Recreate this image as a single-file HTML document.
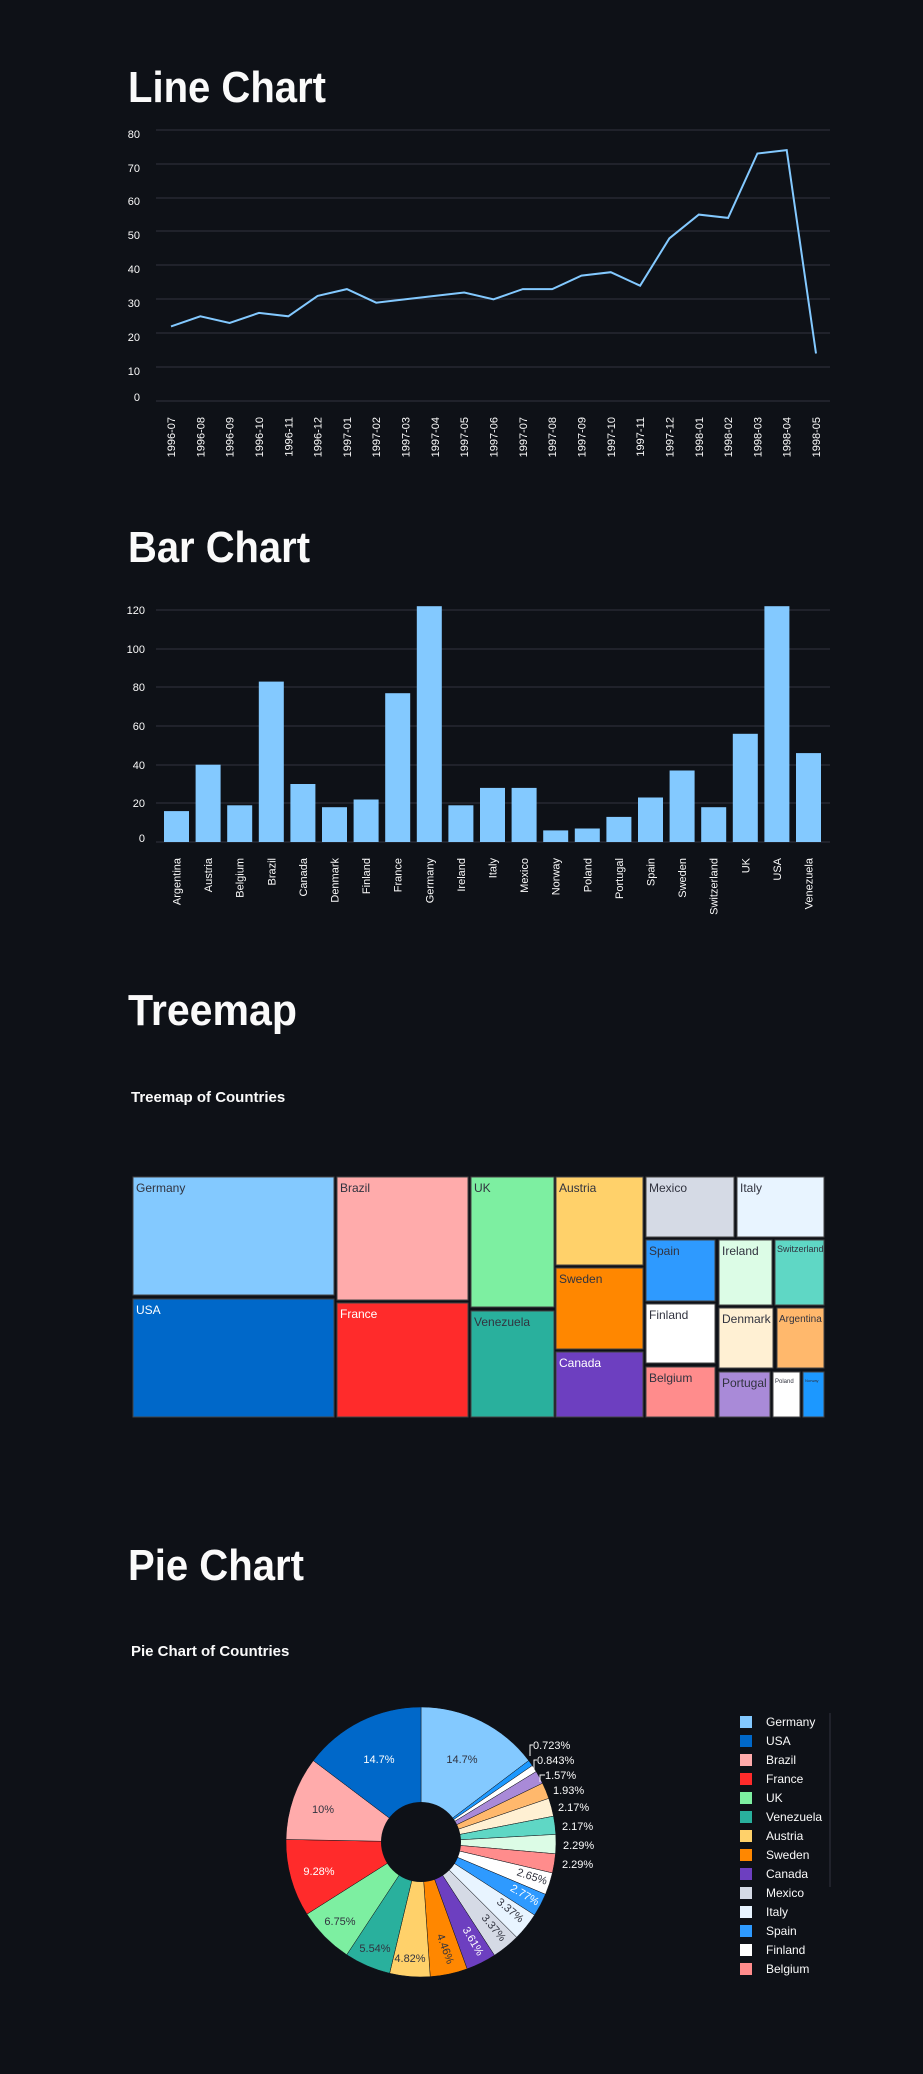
<!DOCTYPE html>
<html><head><meta charset="utf-8"><style>
html,body{margin:0;padding:0;background:#0e1117;}
svg{display:block;font-family:"Liberation Sans",sans-serif;}
.t{font-weight:bold;fill:#fafafa;font-size:44px}
.ax{fill:#fafafa;font-size:11px}
.g{stroke:#31333f;stroke-width:1}
.tm{font-size:12px;fill:#31333f}
.tw{font-size:12px;fill:#fff}
.pl{font-size:11px;fill:#31333f}
.po{font-size:11px;fill:#fafafa}
.lg{font-size:12px;fill:#fafafa}
</style></head><body>
<svg width="923" height="2074" viewBox="0 0 923 2074" xmlns="http://www.w3.org/2000/svg">
<rect width="923" height="2074" fill="#0e1117"/>
<text class="t" x="128" y="102" textLength="198" lengthAdjust="spacingAndGlyphs">Line Chart</text>
<g class="g">
<line x1="156" x2="830" y1="130" y2="130"/><line x1="156" x2="830" y1="164" y2="164"/><line x1="156" x2="830" y1="198" y2="198"/><line x1="156" x2="830" y1="231" y2="231"/><line x1="156" x2="830" y1="265" y2="265"/><line x1="156" x2="830" y1="299" y2="299"/><line x1="156" x2="830" y1="333" y2="333"/><line x1="156" x2="830" y1="367" y2="367"/><line x1="156" x2="830" y1="401" y2="401"/>
</g>
<g class="ax" text-anchor="end">
<text x="140" y="138">80</text><text x="140" y="172">70</text><text x="140" y="205">60</text><text x="140" y="239">50</text><text x="140" y="273">40</text><text x="140" y="307">30</text><text x="140" y="341">20</text><text x="140" y="375">10</text><text x="140" y="401">0</text>
</g>
<polyline fill="none" stroke="#83c9ff" stroke-width="2" points="171,326.4 200.3,316.3 229.6,323 259,312.9 288.3,316.3 317.6,295.9 346.9,289.1 376.2,302.7 405.6,299.3 434.9,295.9 464.2,292.5 493.5,299.3 522.8,289.1 552.2,289.1 581.5,275.6 610.8,272.2 640.1,285.7 669.4,238.3 698.8,214.6 728.1,217.9 757.4,153.5 786.7,150.1 816,353.5"/>
<g class="ax" text-anchor="end">
<text transform="translate(175,417) rotate(-90)">1996-07</text>
<text transform="translate(204.3,417) rotate(-90)">1996-08</text>
<text transform="translate(233.6,417) rotate(-90)">1996-09</text>
<text transform="translate(263,417) rotate(-90)">1996-10</text>
<text transform="translate(292.3,417) rotate(-90)">1996-11</text>
<text transform="translate(321.6,417) rotate(-90)">1996-12</text>
<text transform="translate(350.9,417) rotate(-90)">1997-01</text>
<text transform="translate(380.2,417) rotate(-90)">1997-02</text>
<text transform="translate(409.6,417) rotate(-90)">1997-03</text>
<text transform="translate(438.9,417) rotate(-90)">1997-04</text>
<text transform="translate(468.2,417) rotate(-90)">1997-05</text>
<text transform="translate(497.5,417) rotate(-90)">1997-06</text>
<text transform="translate(526.8,417) rotate(-90)">1997-07</text>
<text transform="translate(556.2,417) rotate(-90)">1997-08</text>
<text transform="translate(585.5,417) rotate(-90)">1997-09</text>
<text transform="translate(614.8,417) rotate(-90)">1997-10</text>
<text transform="translate(644.1,417) rotate(-90)">1997-11</text>
<text transform="translate(673.4,417) rotate(-90)">1997-12</text>
<text transform="translate(702.8,417) rotate(-90)">1998-01</text>
<text transform="translate(732.1,417) rotate(-90)">1998-02</text>
<text transform="translate(761.4,417) rotate(-90)">1998-03</text>
<text transform="translate(790.7,417) rotate(-90)">1998-04</text>
<text transform="translate(820,417) rotate(-90)">1998-05</text>
</g>
<text class="t" x="128" y="562" textLength="182" lengthAdjust="spacingAndGlyphs">Bar Chart</text>
<g class="g">
<line x1="156" x2="830" y1="610" y2="610"/><line x1="156" x2="830" y1="649" y2="649"/><line x1="156" x2="830" y1="687" y2="687"/><line x1="156" x2="830" y1="726" y2="726"/><line x1="156" x2="830" y1="765" y2="765"/><line x1="156" x2="830" y1="803" y2="803"/><line x1="156" x2="830" y1="842" y2="842"/>
</g>
<g class="ax" text-anchor="end">
<text x="145" y="614">120</text><text x="145" y="653">100</text><text x="145" y="691">80</text><text x="145" y="730">60</text><text x="145" y="769">40</text><text x="145" y="807">20</text><text x="145" y="842">0</text>
</g>
<g fill="#83c9ff">
<rect x="164" y="811.1" width="25" height="30.9"/><rect x="195.6" y="764.7" width="25" height="77.3"/><rect x="227.2" y="805.3" width="25" height="36.7"/><rect x="258.8" y="681.6" width="25" height="160.4"/><rect x="290.4" y="784" width="25" height="58"/><rect x="322" y="807.2" width="25" height="34.8"/><rect x="353.6" y="799.5" width="25" height="42.5"/><rect x="385.2" y="693.2" width="25" height="148.8"/><rect x="416.8" y="606.2" width="25" height="235.8"/><rect x="448.4" y="805.3" width="25" height="36.7"/><rect x="480" y="787.9" width="25" height="54.1"/><rect x="511.6" y="787.9" width="25" height="54.1"/><rect x="543.2" y="830.4" width="25" height="11.6"/><rect x="574.8" y="828.5" width="25" height="13.5"/><rect x="606.4" y="816.9" width="25" height="25.1"/><rect x="638" y="797.5" width="25" height="44.5"/><rect x="669.6" y="770.5" width="25" height="71.5"/><rect x="701.2" y="807.2" width="25" height="34.8"/><rect x="732.8" y="733.8" width="25" height="108.2"/><rect x="764.4" y="606.2" width="25" height="235.8"/><rect x="796" y="753.1" width="25" height="88.9"/>
</g>
<g class="ax" text-anchor="end">
<text transform="translate(180.5,858) rotate(-90)">Argentina</text>
<text transform="translate(212.1,858) rotate(-90)">Austria</text>
<text transform="translate(243.7,858) rotate(-90)">Belgium</text>
<text transform="translate(275.3,858) rotate(-90)">Brazil</text>
<text transform="translate(306.9,858) rotate(-90)">Canada</text>
<text transform="translate(338.5,858) rotate(-90)">Denmark</text>
<text transform="translate(370.1,858) rotate(-90)">Finland</text>
<text transform="translate(401.7,858) rotate(-90)">France</text>
<text transform="translate(433.3,858) rotate(-90)">Germany</text>
<text transform="translate(464.9,858) rotate(-90)">Ireland</text>
<text transform="translate(496.5,858) rotate(-90)">Italy</text>
<text transform="translate(528.1,858) rotate(-90)">Mexico</text>
<text transform="translate(559.7,858) rotate(-90)">Norway</text>
<text transform="translate(591.3,858) rotate(-90)">Poland</text>
<text transform="translate(622.9,858) rotate(-90)">Portugal</text>
<text transform="translate(654.5,858) rotate(-90)">Spain</text>
<text transform="translate(686.1,858) rotate(-90)">Sweden</text>
<text transform="translate(717.7,858) rotate(-90)">Switzerland</text>
<text transform="translate(749.3,858) rotate(-90)">UK</text>
<text transform="translate(780.9,858) rotate(-90)">USA</text>
<text transform="translate(812.5,858) rotate(-90)">Venezuela</text>
</g>
<text class="t" x="128" y="1025" textLength="169" lengthAdjust="spacingAndGlyphs">Treemap</text>
<text x="131" y="1102" font-size="15" font-weight="bold" fill="#fafafa">Treemap of Countries</text>
<g stroke="#444" stroke-width="1">
<rect x="133" y="1177" width="201" height="118" fill="#83c9ff"/>
<rect x="133" y="1299" width="201" height="118" fill="#0068c9"/>
<rect x="337" y="1177" width="131" height="123" fill="#ffabab"/>
<rect x="337" y="1303" width="131" height="114" fill="#ff2b2b"/>
<rect x="471" y="1177" width="83" height="130" fill="#7defa1"/>
<rect x="471" y="1311" width="83" height="106" fill="#29b09d"/>
<rect x="556" y="1177" width="87" height="88" fill="#ffd16a"/>
<rect x="556" y="1268" width="87" height="81" fill="#ff8700"/>
<rect x="556" y="1352" width="87" height="65" fill="#6d3fc0"/>
<rect x="646" y="1177" width="88" height="60" fill="#d5dae5"/>
<rect x="737" y="1177" width="87" height="60" fill="#e8f4ff"/>
<rect x="646" y="1240" width="69" height="61" fill="#2e9aff"/>
<rect x="646" y="1304" width="69" height="59" fill="#ffffff"/>
<rect x="646" y="1367" width="69" height="50" fill="#ff8c8c"/>
<rect x="719" y="1240" width="53" height="65" fill="#dcfce6"/>
<rect x="775" y="1240" width="49" height="65" fill="#5fd7c5"/>
<rect x="719" y="1308" width="54" height="60" fill="#fff0d3"/>
<rect x="777" y="1308" width="47" height="60" fill="#ffb86c"/>
<rect x="719" y="1372" width="51" height="45" fill="#a98ad8"/>
<rect x="773" y="1372" width="27" height="45" fill="#ffffff"/>
<rect x="803" y="1372" width="21" height="45" fill="#1c98ff"/>
</g>
<g class="tm">
<text x="136" y="1192">Germany</text><text class="tw" x="136" y="1314">USA</text>
<text x="340" y="1192">Brazil</text><text class="tw" x="340" y="1318">France</text>
<text x="474" y="1192">UK</text><text x="474" y="1326">Venezuela</text>
<text x="559" y="1192">Austria</text><text x="559" y="1283">Sweden</text><text class="tw" x="559" y="1367">Canada</text>
<text x="649" y="1192">Mexico</text><text x="740" y="1192">Italy</text>
<text x="649" y="1255">Spain</text><text x="649" y="1319">Finland</text><text x="649" y="1382">Belgium</text>
<text x="722" y="1255">Ireland</text><text x="777" y="1252" font-size="9">Switzerland</text>
<text x="722" y="1323">Denmark</text><text x="779" y="1322" font-size="10">Argentina</text>
<text x="722" y="1387">Portugal</text><text x="775" y="1383" font-size="6">Poland</text><text x="805" y="1382" font-size="4">Norway</text>
</g>
<text class="t" x="128" y="1580" textLength="176" lengthAdjust="spacingAndGlyphs">Pie Chart</text>
<text x="131" y="1656" font-size="15" font-weight="bold" fill="#fafafa">Pie Chart of Countries</text>
<g id="pie"></g>
<circle cx="421" cy="1842" r="40" fill="#0e1117"/>
<g class="pl" text-anchor="middle">
<text x="462" y="1763">14.7%</text>
<text x="379" y="1763" fill="#fff">14.7%</text>
<text x="323" y="1813">10%</text>
<text x="319" y="1875" fill="#fff">9.28%</text>
<text x="340" y="1925">6.75%</text>
<text x="375" y="1952">5.54%</text>
<text x="410" y="1962">4.82%</text>
<text transform="translate(442,1950) rotate(70)">4.46%</text>
<text transform="translate(470,1943) rotate(60)" fill="#fff">3.61%</text>
<text transform="translate(491,1930) rotate(50)">3.37%</text>
<text transform="translate(508,1913) rotate(40)">3.37%</text>
<text transform="translate(523,1898) rotate(30)" fill="#fff">2.77%</text>
<text transform="translate(531,1880) rotate(18)">2.65%</text>
</g>
<g class="po">
<text x="562" y="1868">2.29%</text><text x="563" y="1849">2.29%</text><text x="562" y="1830">2.17%</text><text x="558" y="1811">2.17%</text><text x="553" y="1794">1.93%</text><text x="545" y="1779">1.57%</text><text x="537" y="1764">0.843%</text><text x="533" y="1749">0.723%</text>
</g>
<g fill="none" stroke="#fafafa" stroke-width="1">
<path d="M530,1756 V1745 H533"/><path d="M534,1770 V1760 H537"/><path d="M540,1782 V1775 H545"/>
</g>
<line x1="830" y1="1713" x2="830" y2="1887" stroke="#31333f"/>
<g>
<rect x="740" y="1716" width="12" height="12" fill="#83c9ff"/><rect x="740" y="1735" width="12" height="12" fill="#0068c9"/><rect x="740" y="1754" width="12" height="12" fill="#ffabab"/><rect x="740" y="1773" width="12" height="12" fill="#ff2b2b"/><rect x="740" y="1792" width="12" height="12" fill="#7defa1"/><rect x="740" y="1811" width="12" height="12" fill="#29b09d"/><rect x="740" y="1830" width="12" height="12" fill="#ffd16a"/><rect x="740" y="1849" width="12" height="12" fill="#ff8700"/><rect x="740" y="1868" width="12" height="12" fill="#6d3fc0"/><rect x="740" y="1887" width="12" height="12" fill="#d5dae5"/><rect x="740" y="1906" width="12" height="12" fill="#e8f4ff"/><rect x="740" y="1925" width="12" height="12" fill="#2e9aff"/><rect x="740" y="1944" width="12" height="12" fill="#ffffff"/><rect x="740" y="1963" width="12" height="12" fill="#ff8c8c"/>
</g>
<g class="lg">
<text x="766" y="1726">Germany</text><text x="766" y="1745">USA</text><text x="766" y="1764">Brazil</text><text x="766" y="1783">France</text><text x="766" y="1802">UK</text><text x="766" y="1821">Venezuela</text><text x="766" y="1840">Austria</text><text x="766" y="1859">Sweden</text><text x="766" y="1878">Canada</text><text x="766" y="1897">Mexico</text><text x="766" y="1916">Italy</text><text x="766" y="1935">Spain</text><text x="766" y="1954">Finland</text><text x="766" y="1973">Belgium</text>
</g>
</svg>
<script>
(function(){
var ns="http://www.w3.org/2000/svg";
var sl=[[14.7,"#83c9ff"],[0.723,"#1c98ff"],[0.843,"#ffffff"],[1.57,"#a98ad8"],[1.93,"#ffb86c"],[2.17,"#fff0d3"],[2.17,"#5fd7c5"],[2.29,"#dcfce6"],[2.29,"#ff8c8c"],[2.65,"#ffffff"],[2.77,"#2e9aff"],[3.37,"#e8f4ff"],[3.37,"#d5dae5"],[3.61,"#6d3fc0"],[4.46,"#ff8700"],[4.82,"#ffd16a"],[5.54,"#29b09d"],[6.75,"#7defa1"],[9.28,"#ff2b2b"],[10,"#ffabab"],[14.7,"#0068c9"]];
var cx=421,cy=1842,r=135,a=0,pie=document.getElementById('pie');
sl.forEach(function(s){var a2=a+s[0]/100.006*2*Math.PI;
var x1=cx+r*Math.sin(a),y1=cy-r*Math.cos(a),x2=cx+r*Math.sin(a2),y2=cy-r*Math.cos(a2);
var p=document.createElementNS(ns,'path');p.setAttribute('d','M'+cx+','+cy+' L'+x1+','+y1+' A'+r+','+r+' 0 '+((a2-a)>Math.PI?1:0)+' 1 '+x2+','+y2+' Z');p.setAttribute('fill',s[1]);p.setAttribute('stroke','#0e1117');p.setAttribute('stroke-width','0.5');pie.appendChild(p);a=a2;});
})();
</script>
</body></html>
